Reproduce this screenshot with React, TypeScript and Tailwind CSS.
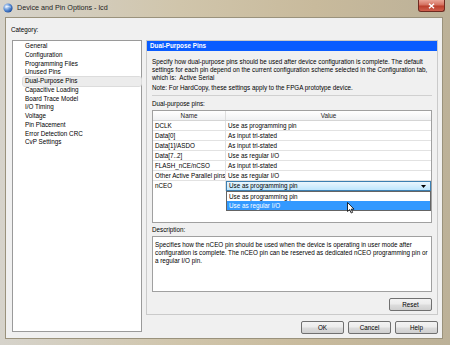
const categories = [
  "General",
  "Configuration",
  "Programming Files",
  "Unused Pins",
  "Dual-Purpose Pins",
  "Capacitive Loading",
  "Board Trace Model",
  "I/O Timing",
  "Voltage",
  "Pin Placement",
  "Error Detection CRC",
  "CvP Settings",
];

const pins = [
  { name: "DCLK", value: "Use as programming pin" },
  { name: "Data[0]", value: "As input tri-stated" },
  { name: "Data[1]/ASDO", value: "As input tri-stated" },
  { name: "Data[7..2]", value: "Use as regular I/O" },
  { name: "FLASH_nCE/nCSO", value: "As input tri-stated" },
  { name: "Other Active Parallel pins", value: "Use as regular I/O" },
];

const btn =
  "h-[13px] w-[43px] flex items-center justify-center rounded-[2px] border border-[#707070] bg-[linear-gradient(180deg,#f3f3f3_0%,#ebebeb_48%,#dddddd_52%,#cfcfcf_100%)] text-black";

const AppIcon = () => (
  <svg width="10" height="10" viewBox="0 0 10 10">
    <defs>
      <radialGradient id="g" cx="35%" cy="35%" r="70%">
        <stop offset="0%" stopColor="#e8f2ff" />
        <stop offset="55%" stopColor="#5b8fd6" />
        <stop offset="100%" stopColor="#1d4c9c" />
      </radialGradient>
    </defs>
    <circle cx="5" cy="5" r="4.6" fill="url(#g)" />
    <path d="M2 4.2 Q5 2.6 8 4.2" stroke="#ffffff" strokeOpacity="0.7" strokeWidth="0.7" fill="none" />
  </svg>
);

// mouse pointer hovering the open dropdown
const Cursor = () => (
  <svg width="8" height="12" viewBox="0 0 8 12" className="absolute left-[121px] top-[21px] z-20">
    <path d="M0.5 0.5 L0.5 9.5 L2.7 7.6 L4.2 11 L5.6 10.4 L4.2 7.1 L7 7.1 Z" fill="#ffffff" stroke="#000000" strokeWidth="0.8" strokeLinejoin="round" />
  </svg>
);

export default function App() {
  return (
    <div
      className="w-[450px] h-[345px] flex flex-col overflow-hidden bg-[linear-gradient(90deg,#d6d3cb_0%,#d0c5ab_40%,#c8ba9c_70%,#bcb198_100%)] text-[6.3px] text-black"
      style={{ fontFamily: '"Liberation Sans", Arial, sans-serif' }}
    >
      {/* Title bar */}
      <div className="h-[17px] flex items-start shrink-0">
        <div className="ml-[3px] mt-[3px]">
          <AppIcon />
        </div>
        <div className="ml-[4px] leading-[16px] text-[7.2px] text-[#1e1e1e]">Device and Pin Options - lcd</div>
        <div className="ml-auto mr-[5px] w-[27px] h-[12px] flex items-center justify-center rounded-b-[3px] border border-t-0 border-[#6e2a20] bg-[linear-gradient(180deg,#eaa596_0%,#d4705f_45%,#bb3f2c_55%,#d0604e_100%)]">
          <svg width="7" height="6" viewBox="0 0 7 6">
            <path d="M1 0.8 L6 5.2 M6 0.8 L1 5.2" stroke="#ffffff" strokeWidth="1.4" />
          </svg>
        </div>
      </div>

      {/* Client area */}
      <div className="ml-[5px] mr-[7px] mb-[6px] h-[322px] border border-[#9a927c] bg-[#f0f0f0] flex flex-col">
        <div className="h-[22px] pt-[8px] pl-[5px] leading-[8px]">Category:</div>

        <div className="flex pl-[6px] gap-[4px]">
          {/* Category list */}
          <div className="w-[130px] h-[292px] border border-[#9a9a9a] bg-white pt-[1px]">
            {categories.map((c) => (
              <div
                key={c}
                className={
                  "ml-[10px] pl-[2px] h-[8.75px] leading-[8.75px] rounded-[2px] " +
                  (c === "Dual-Purpose Pins" ? "bg-[#ececec] outline outline-1 outline-[#dcdcdc]" : "")
                }
              >
                {c}
              </div>
            ))}
          </div>

          {/* Right column */}
          <div className="w-[292px] flex flex-col">
            <div className="h-[275px] border border-[#cacaca] flex flex-col">
              <div className="h-[10px] bg-[#0a5cff] text-white font-bold pl-[3px] leading-[10px]">Dual-Purpose Pins</div>
              <div className="px-[5px] flex flex-col">
                <p className="mt-[6.5px] leading-[8px]">
                  Specify how dual-purpose pins should be used after device configuration is complete. The default settings for each pin depend on the current configuration scheme selected in the Configuration tab, which is:&nbsp; Active Serial
                </p>
                <p className="mt-[2.5px] leading-[8px]">Note: For HardCopy, these settings apply to the FPGA prototype device.</p>
                <div className="mt-[3px] h-px bg-[#d0d0d0]" />
                <div className="mt-[4px] leading-[8px]">Dual-purpose pins:</div>

                {/* Pins table */}
                <div className="mt-[2px] h-[113px] border border-[#a0a0a0] bg-white">
                  <div className="h-[10px] flex border-b border-[#d5d5d5] bg-[linear-gradient(180deg,#ffffff,#f0f1f3)] leading-[9px] text-[#222]">
                    <div className="w-[73px] text-center border-r border-[#dedede]">Name</div>
                    <div className="flex-1 text-center">Value</div>
                  </div>
                  {pins.map((p) => (
                    <div key={p.name} className="h-[10px] flex border-b border-[#e2e2e2] leading-[9px]">
                      <div className="w-[73px] pl-[2px] border-r border-[#e2e2e2] whitespace-nowrap overflow-hidden">{p.name}</div>
                      <div className="flex-1 pl-[2px]">{p.value}</div>
                    </div>
                  ))}
                  <div className="h-[10px] flex leading-[9px]">
                    <div className="w-[73px] pl-[2px] border-r border-[#e2e2e2]">nCEO</div>
                    <div className="flex-1 relative">
                      <div className="h-[10px] flex items-center justify-between border border-[#3c7fb1] bg-[linear-gradient(180deg,#eaf6fd,#bee6fd)] pl-[2px] pr-[4px] leading-[8px]">
                        <span>Use as programming pin</span>
                        <svg width="5" height="3" viewBox="0 0 5 3">
                          <path d="M0 0 L5 0 L2.5 3 Z" fill="#000" />
                        </svg>
                      </div>
                      <div className="absolute left-0 right-0 top-[10px] border border-[#646464] bg-white z-10 leading-[9px]">
                        <div className="h-[9px] pl-[2px]">Use as programming pin</div>
                        <div className="h-[9px] pl-[2px] bg-[#3399ff] text-white">Use as regular I/O</div>
                      </div>
                      <Cursor />
                    </div>
                  </div>
                </div>

                <div className="mt-[3px] leading-[8px]">Description:</div>
                <div className="mt-[2px] h-[56px] border border-[#a0a0a0] bg-white pl-[2px] pr-[1px] pt-[4px] leading-[8px]">
                  Specifies how the nCEO pin should be used when the device is operating in user mode after configuration is complete. The nCEO pin can be reserved as dedicated nCEO programming pin or a regular I/O pin.
                </div>
                <div className="mt-[6px] self-end">
                  <div className={btn}>Reset</div>
                </div>
              </div>
            </div>

            <div className="mt-[6px] flex justify-end gap-[4px]">
              <div className={btn}>OK</div>
              <div className={btn}>Cancel</div>
              <div className={btn}>Help</div>
            </div>
          </div>
        </div>
      </div>
    </div>
  );
}
